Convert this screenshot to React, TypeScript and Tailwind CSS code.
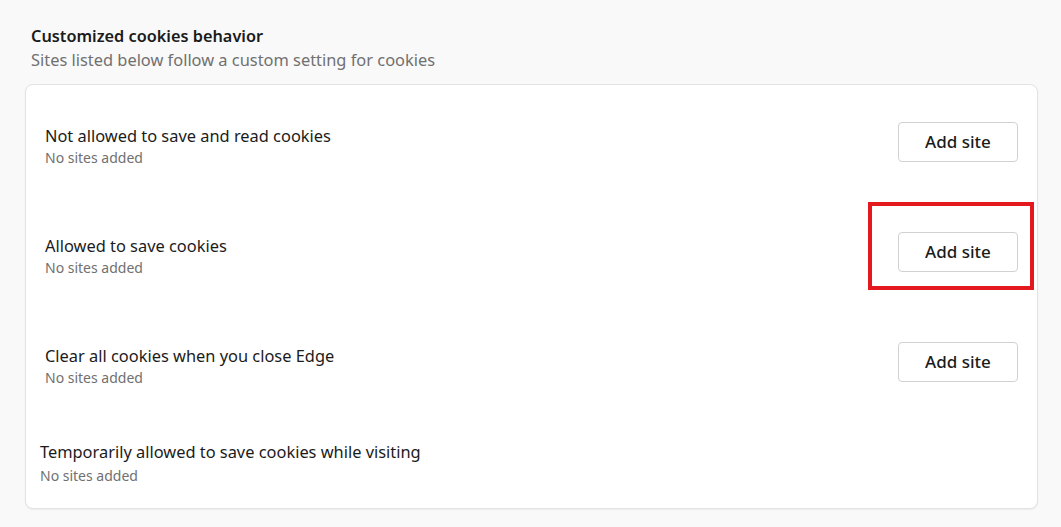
const rows = [
  'Not allowed to save and read cookies',
  'Allowed to save cookies',
  'Clear all cookies when you close Edge',
]

function AddSiteButton() {
  return (
    <button
      type="button"
      className="h-10 w-[120px] shrink-0 rounded-[4px] border border-[#d1d1d1] bg-white text-[17px] font-medium text-[#1b1b1b]"
    >
      Add site
    </button>
  )
}

export default function App() {
  return (
    <div
      className="h-[527px] w-[1061px] overflow-hidden bg-[#f9f9f9] pl-[25px] pt-[25px]"
      style={{ fontFamily: '"Noto Sans", "Open Sans", sans-serif' }}
    >
      <div className="pl-[6px]">
        <h2 className="text-[16.3px] font-semibold leading-[22px] text-[#1b1b1b]">
          Customized cookies behavior
        </h2>
        <p className="mt-[2px] text-[16.4px] leading-[22px] text-[#707070]">
          Sites listed below follow a custom setting for cookies
        </p>
      </div>

      <div className="mt-[13px] h-[425px] w-[1013px] rounded-[8px] border border-[#e3e3e3] bg-white pt-[37px] shadow-[0_1px_2px_rgba(0,0,0,0.06)]">
        {rows.map((title, i) => (
          <div key={title} className="relative flex h-[110px] items-start justify-between px-[19px]">
            <div className="pt-[3px]">
              <div className="text-[16.4px] leading-[22px] text-[#1b1b1b]">{title}</div>
              <div className="mt-[1px] text-[14px] leading-[20px] text-[#707070]">No sites added</div>
            </div>
            <AddSiteButton />
            {i === 1 && (
              <div className="absolute right-[3px] top-[-30px] h-[88px] w-[166px] border-[4px] border-[#e3191e]" />
            )}
          </div>
        ))}
        <div className="-mt-[11px] px-[14px]">
          <div className="text-[16.4px] leading-[22px] text-[#1b1b1b]">
            Temporarily allowed to save cookies while visiting
          </div>
          <div className="mt-[3px] text-[14px] leading-[20px] text-[#707070]">No sites added</div>
        </div>
      </div>
    </div>
  )
}
